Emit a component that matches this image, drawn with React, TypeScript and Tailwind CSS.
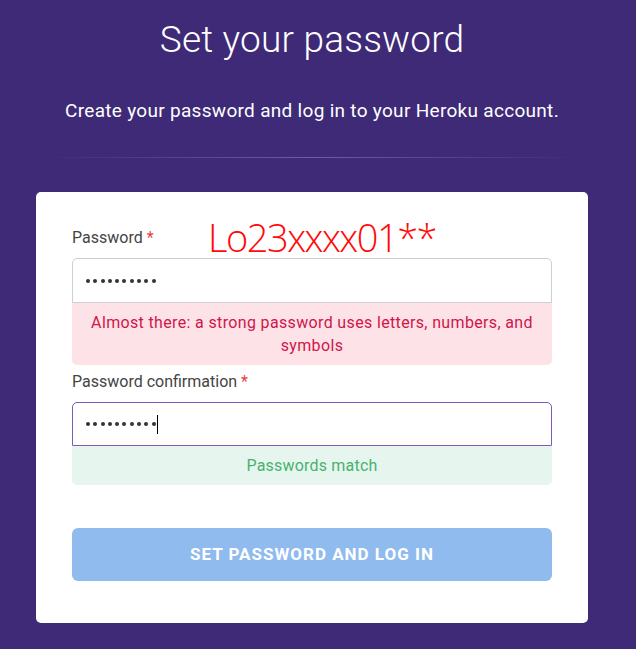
import React from "react";

function Dots() {
  return (
    <div className="flex items-center gap-[3.3px]">
      {Array.from({ length: 10 }).map((_, i) => (
        <span key={i} className="block w-[4px] h-[4px] rounded-full bg-[#333]" />
      ))}
    </div>
  );
}

export default function App() {
  return (
    <div
      className="min-h-[649px] bg-[#3e2a77] overflow-hidden"
      style={{ fontFamily: "Roboto, 'Liberation Sans', Arial, sans-serif" }}
    >
      <div className="w-[552px] ml-9 flex flex-col items-center">
        <h1 className="pt-[18px] text-[37px] leading-[44px] font-light text-white tracking-[0.2px]">
          Set your password
        </h1>
        <p className="mt-[35px] text-[19px] leading-[27px] text-white tracking-[0.3px]">
          Create your password and log in to your Heroku account.
        </p>
        <div className="mt-[33px] h-px w-[544px] bg-gradient-to-r from-transparent via-[#6e5da6] to-transparent" />
        <div className="relative mt-[34px] w-[552px] bg-white rounded-[5px] pt-[34px] px-9 pb-[42px]">
          <div
            className="absolute left-[172px] top-[26px] text-[38px] leading-[38px] text-[#ff0a0a] font-light tracking-[-1.5px]"
            style={{ fontFamily: "'Open Sans', sans-serif" }}
          >
            Lo23xxxx01**
          </div>
          <label className="block text-[16px] leading-6 text-[#444] mb-2">
            Password <span className="text-[#e0443c]">*</span>
          </label>
          <div className="h-[45px] border border-[#cfcfcf] rounded-t-[5px] rounded-b-none flex items-center pl-[13px]">
            <Dots />
          </div>
          <div className="bg-[#fde2e8] rounded-b-[5px] py-2 text-center text-[16px] leading-[23px] text-[#d1154a] tracking-[0.35px]">
            Almost there: a strong password uses letters, numbers, and
            <br />
            symbols
          </div>
          <label className="block mt-[5px] text-[16px] leading-6 text-[#444] mb-2">
            Password confirmation <span className="text-[#e0443c]">*</span>
          </label>
          <div className="h-11 border border-[#7c5cb5] rounded-t-[5px] flex items-center pl-[13px]">
            <Dots />
            <span className="block w-px h-[19px] bg-black ml-[1px]" />
          </div>
          <div className="bg-[#e6f6ef] rounded-b-[5px] py-2 text-center text-[16px] leading-[23px] text-[#48b26d] tracking-[0.2px]">
            Passwords match
          </div>
          <button className="mt-[43px] w-full h-[53px] rounded-[6px] bg-[#90bbee] text-white font-bold text-[17px] tracking-[1px] uppercase">
            Set password and log in
          </button>
        </div>
      </div>
    </div>
  );
}
